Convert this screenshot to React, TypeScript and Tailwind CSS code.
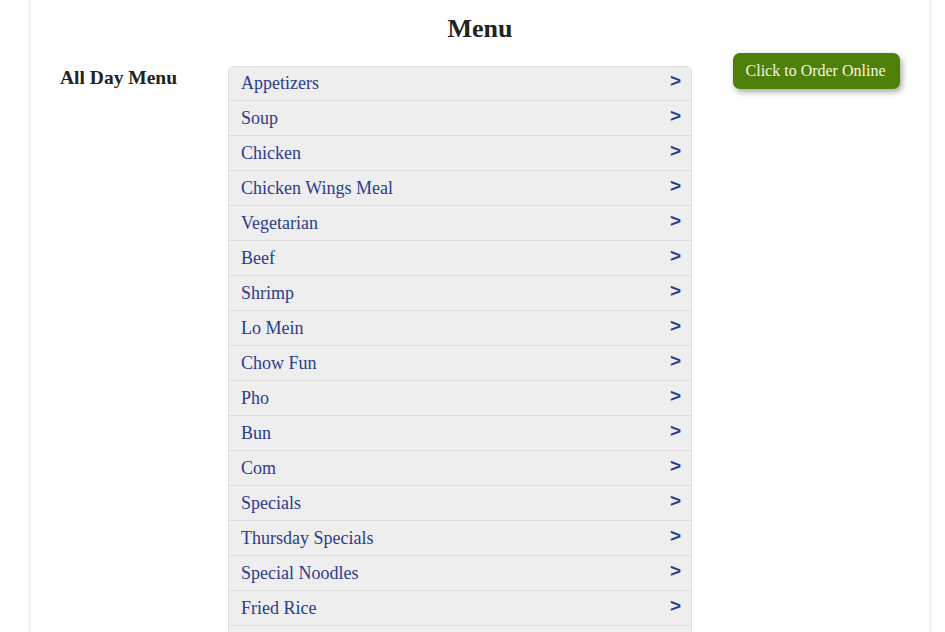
const categories = [
  "Appetizers",
  "Soup",
  "Chicken",
  "Chicken Wings Meal",
  "Vegetarian",
  "Beef",
  "Shrimp",
  "Lo Mein",
  "Chow Fun",
  "Pho",
  "Bun",
  "Com",
  "Specials",
  "Thursday Specials",
  "Special Noodles",
  "Fried Rice",
  "Beverages",
];

export default function App() {
  return (
    <div className="h-[632px] overflow-hidden bg-white font-['Liberation_Serif',serif]">
      <div className="ml-[29px] min-h-[632px] w-[902px] border-x-2 border-[#f0f0f0]">
        <h1 className="pt-[12px] text-center text-[26px] font-bold leading-[34px] text-[#222]">
          Menu
        </h1>

        <div className="mt-[7px] flex items-start">
          <div className="w-[197px] pl-[29px] pt-[13px]">
            <h2 className="text-[19.5px] font-bold leading-[24px] text-[#222]">
              All Day Menu
            </h2>
          </div>

          <ul className="mt-[13px] w-[464px] overflow-hidden rounded-t-[5px] border border-[#dddddd]">
            {categories.map((name, i) => (
              <li
                key={name}
                className={`flex justify-between bg-[#eeeeee] pl-3 pr-[10px] ${
                  i > 0 ? "h-[35px] border-t border-[#dddddd]" : "h-[33px]"
                }`}
              >
                <span
                  className={`text-[18px] leading-[24px] text-[#2b3c8c] ${
                    i > 0 ? "pt-[5px]" : "pt-[4px]"
                  }`}
                >
                  {name}
                </span>
                <span
                  className={`font-['Liberation_Sans',sans-serif] text-[19px] font-bold leading-[22px] text-[#2b3c8c] ${
                    i > 0 ? "pt-[4px]" : "pt-[3px]"
                  }`}
                >
                  &gt;
                </span>
              </li>
            ))}
          </ul>

          <div className="ml-[41px]">
            <button
              type="button"
              className="h-[36px] w-[167px] rounded-[7px] bg-[#4e8008] pr-[2px] text-[16px] leading-[20px] text-[#f4f4e8] shadow-[2px_3px_6px_rgba(0,0,0,0.35)]"
            >
              Click to Order Online
            </button>
          </div>
        </div>
      </div>
    </div>
  );
}
